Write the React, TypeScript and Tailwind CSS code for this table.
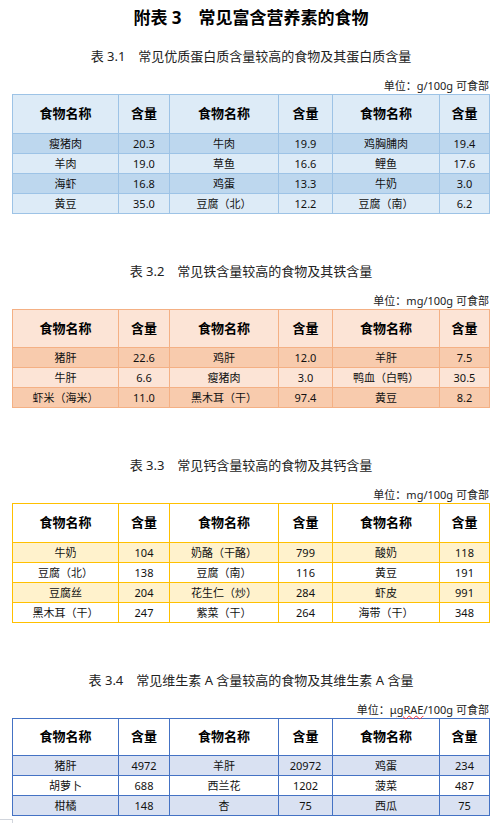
type Row = [string, string, string, string, string, string];

type Theme = {
  border: string;
  head: string;
  odd: string;
  even: string;
  headH: string;
};

const font = { fontFamily: '"Noto Sans", "Noto Sans CJK SC", sans-serif' };

const tables: {
  gap: string;
  title: string;
  unit: React.ReactNode;
  theme: Theme;
  rows: Row[];
}[] = [
  {
    gap: "mt-[11px]",
    title: "表 3.1　常见优质蛋白质含量较高的食物及其蛋白质含量",
    unit: <>单位：g/100g 可食部</>,
    theme: { border: "border-[#9dc3e6]", head: "bg-[#ddebf7]", odd: "bg-[#bdd7ee]", even: "bg-[#ddebf7]", headH: "h-[39px]" },
    rows: [
      ["瘦猪肉", "20.3", "牛肉", "19.9", "鸡胸脯肉", "19.4"],
      ["羊肉", "19.0", "草鱼", "16.6", "鲤鱼", "17.6"],
      ["海虾", "16.8", "鸡蛋", "13.3", "牛奶", "3.0"],
      ["黄豆", "35.0", "豆腐（北）", "12.2", "豆腐（南）", "6.2"],
    ],
  },
  {
    gap: "mt-[48px]",
    title: "表 3.2　常见铁含量较高的食物及其铁含量",
    unit: <>单位：mg/100g 可食部</>,
    theme: { border: "border-[#f4b084]", head: "bg-[#fce4d6]", odd: "bg-[#f8cbad]", even: "bg-[#fce4d6]", headH: "h-[38px]" },
    rows: [
      ["猪肝", "22.6", "鸡肝", "12.0", "羊肝", "7.5"],
      ["牛肝", "6.6", "瘦猪肉", "3.0", "鸭血（白鸭）", "30.5"],
      ["虾米（海米）", "11.0", "黑木耳（干）", "97.4", "黄豆", "8.2"],
    ],
  },
  {
    gap: "mt-[48px]",
    title: "表 3.3　常见钙含量较高的食物及其钙含量",
    unit: <>单位：mg/100g 可食部</>,
    theme: { border: "border-[#ffc000]", head: "bg-white", odd: "bg-[#fff2cc]", even: "bg-white", headH: "h-[39px]" },
    rows: [
      ["牛奶", "104", "奶酪（干酪）", "799", "酸奶", "118"],
      ["豆腐（北）", "138", "豆腐（南）", "116", "黄豆", "191"],
      ["豆腐丝", "204", "花生仁（炒）", "284", "虾皮", "991"],
      ["黑木耳（干）", "247", "紫菜（干）", "264", "海带（干）", "348"],
    ],
  },
  {
    gap: "mt-[48px]",
    title: "表 3.4　常见维生素 A 含量较高的食物及其维生素 A 含量",
    unit: (
      <>
        单位：μ<span className="underline decoration-wavy decoration-red-500 decoration-1">gRAE</span>/100g 可食部
      </>
    ),
    theme: { border: "border-[#4472c4]", head: "bg-white", odd: "bg-[#d9e1f2]", even: "bg-white", headH: "h-[37px]" },
    rows: [
      ["猪肝", "4972", "羊肝", "20972", "鸡蛋", "234"],
      ["胡萝卜", "688", "西兰花", "1202", "菠菜", "487"],
      ["柑橘", "148", "杏", "75", "西瓜", "75"],
    ],
  },
];

const widths = [106, 51, 109, 54, 107, 50];
const heads = ["食物名称", "含量", "食物名称", "含量", "食物名称", "含量"];

function NutrientTable({ theme, rows }: { theme: Theme; rows: Row[] }) {
  return (
    <table className={`ml-[12px] w-[477px] table-fixed border-collapse border ${theme.border}`}>
      <colgroup>
        {widths.map((w, i) => (
          <col key={i} style={{ width: w }} />
        ))}
      </colgroup>
      <thead>
        <tr className={theme.head}>
          {heads.map((h, i) => (
            <th key={i} className={`${theme.headH} border ${theme.border} p-0 text-center text-[13px] font-bold text-black`}>
              {h}
            </th>
          ))}
        </tr>
      </thead>
      <tbody>
        {rows.map((r, ri) => (
          <tr key={ri} className={ri % 2 === 0 ? theme.odd : theme.even}>
            {r.map((c, ci) => (
              <td key={ci} className={`h-[20px] border ${theme.border} p-0 text-center text-[11px] leading-none text-[#111]`}>
                {c}
              </td>
            ))}
          </tr>
        ))}
      </tbody>
    </table>
  );
}

export default function App() {
  return (
    <div className="w-[502px] h-[825px] overflow-hidden bg-white text-black" style={font}>
      <div className="flex h-[36px] items-center justify-center text-[17px] font-bold">
        附表 3　常见富含营养素的食物
      </div>

      {tables.map((t, i) => (
        <section key={i} className={t.gap}>
          <div className="flex h-[20px] items-center justify-center text-[13px] text-[#222]">{t.title}</div>
          <div className="mt-[11px] flex h-[16px] w-[489px] items-center justify-end text-[11px] text-[#222]">
            <span>{t.unit}</span>
          </div>
          <NutrientTable theme={t.theme} rows={t.rows} />
        </section>
      ))}

      {/* page edge */}
      <div className="mt-[3px] h-[4px] w-[13px] border-t border-r border-gray-300" />
    </div>
  );
}
